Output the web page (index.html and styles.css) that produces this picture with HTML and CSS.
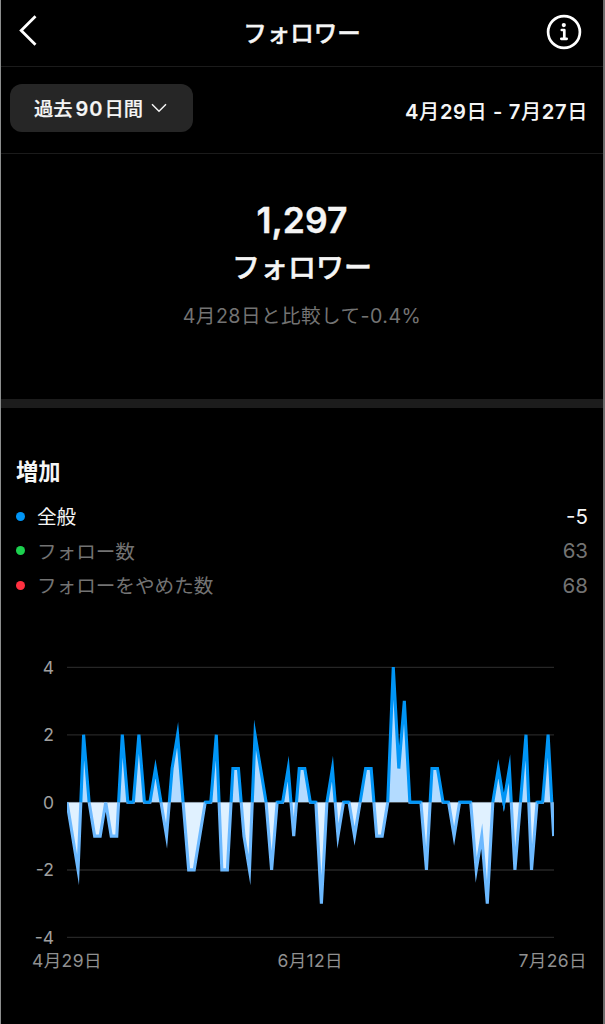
FILE: index.html
```html
<!DOCTYPE html>
<html lang="ja">
<head>
<meta charset="utf-8">
<title>フォロワー</title>
<link rel="stylesheet" href="styles.css">
</head>
<body>
<main class="screen">
  <header class="topbar">
    <svg class="back" width="36" height="34" viewBox="0 0 36 34"><path d="M17.5 2.3 3.2 16.6 17.5 30.7" fill="none" stroke="#fff" stroke-width="2.8"/></svg>
    <h1 class="title">フォロワー</h1>
    <svg class="info" width="36" height="36" viewBox="0 0 36 36"><circle cx="18" cy="18" r="15.9" fill="none" stroke="#fff" stroke-width="2.7"/><circle cx="17.8" cy="11.1" r="2.1" fill="#fff"/><path d="M15.8 16h2.5v8.6M15.3 24.8h5.4" fill="none" stroke="#fff" stroke-width="2.7" stroke-linecap="round" stroke-linejoin="round"/></svg>
  </header>
  <section class="filters">
    <button class="range"><span class="range-text">過去<span class="num">90</span>日間</span><svg width="16" height="10" viewBox="0 0 16 10"><path d="M1 1.2 8 8.2 15 1.2" fill="none" stroke="#f5f5f5" stroke-width="1.5"/></svg></button>
    <span class="dates"><b>4</b>月<b>29</b>日<b> - 7</b>月<b>27</b>日</span>
  </section>
  <section class="summary">
    <div class="count">1,297</div>
    <div class="count-label">フォロワー</div>
    <div class="compare">4月28日と比較して-0.4%</div>
  </section>
  <section class="growth">
    <h2 class="heading">増加</h2>
    <ul class="legend">
      <li class="row active"><i class="dot blue"></i><span class="name">全般</span><span class="value">-5</span></li>
      <li class="row"><i class="dot green"></i><span class="name">フォロー数</span><span class="value">63</span></li>
      <li class="row"><i class="dot red"></i><span class="name">フォローをやめた数</span><span class="value">68</span></li>
    </ul>
    <div class="chart">
      <div class="yaxis"><span>4</span><span>2</span><span>0</span><span>-2</span><span>-4</span></div>
      <svg class="plot" width="487" height="272" viewBox="0 0 487 272">
        <defs>
          <clipPath id="above"><path d="M0-2H487V136.3H442V145H432V136.3H42V120H35.5V136.3H0Z"/></clipPath>
          <clipPath id="below"><rect y="136.3" width="487" height="136"/></clipPath>
          <polyline id="series" vector-effect="non-scaling-stroke" points="0,0 1,-1 2,-2 3,2 4,0 5,-1 6,-1 7,0 8,-1 9,-1 10,2 11,0 12,0 13,2 14,0 15,0 16,1 17,0 18,-1 19,1 20,2 21,0 22,-2 23,-2 24,-1 25,0 26,0 27,2 28,-2 29,-2 30,1 31,1 32,-1 33,-2 34,2 35,1 36,0 37,-2 38,0 39,0 40,1 41,-1 42,1 43,1 44,0 45,0 46,-3 47,0 48,1 49,-1 50,0 51,0 52,-1 53,0 54,1 55,1 56,-1 57,-1 58,0 59,4 60,1 61,3 62,0 63,0 64,0 65,-2 66,1 67,1 68,0 69,0 70,-1 71,0 72,0 73,0 74,-2 75,-1 76,-3 77,0 78,1 79,0 80,1 81,-2 82,0 83,2 84,-2 85,0 86,0 87,2 88,-1 88,0"/>
          <polyline id="line" vector-effect="non-scaling-stroke" points="0,0 1,-1 2,-2 3,2 4,0 5,-1 6,-1 7,0 8,-1 9,-1 10,2 11,0 12,0 13,2 14,0 15,0 16,1 17,0 18,-1 19,1 20,2 21,0 22,-2 23,-2 24,-1 25,0 26,0 27,2 28,-2 29,-2 30,1 31,1 32,-1 33,-2 34,2 35,1 36,0 37,-2 38,0 39,0 40,1 41,-1 42,1 43,1 44,0 45,0 46,-3 47,0 48,1 49,-1 50,0 51,0 52,-1 53,0 54,1 55,1 56,-1 57,-1 58,0 59,4 60,1 61,3 62,0 63,0 64,0 65,-2 66,1 67,1 68,0 69,0 70,-1 71,0 72,0 73,0 74,-2 75,-1 76,-3 77,0 78,1 79,0 80,1 81,-2 82,0 83,2 84,-2 85,0 86,0 87,2 88,-1"/>
        </defs>
        <path class="grid" d="M0 1.3H487M0 68.8H487M0 136.3H487M0 204H487M0 271.3H487"/>
        <g clip-path="url(#below)"><g transform="translate(0 136.3) scale(5.53 -33.8)"><use href="#series" class="fill-low"/><use href="#line" class="line-low"/></g></g>
        <g clip-path="url(#above)"><g transform="translate(0 136.3) scale(5.53 -33.8)"><use href="#series" class="fill-high"/><use href="#line" class="line-high"/></g></g>
        <path class="flat" transform="translate(0 136.3) scale(5.53 1)" d="M11 0H12M14 0H15M25 0H26M38 0H39M44 0H45M50 0H51M62 0H64M68 0H69M71 0H73M85 0H86"/>
      </svg>
    </div>
    <div class="xaxis"><span>4月29日</span><span>6月12日</span><span>7月26日</span></div>
  </section>
</main>
</body>
</html>
```
FILE: styles.css
```css
* { box-sizing: border-box; margin: 0; padding: 0; }
body { background: #000; color: #f5f5f5; font-family: Inter, "Noto Sans CJK JP", sans-serif; }
.screen { width: 605px; height: 1024px; background: #000; border-left: 1px solid #8c8e8e; border-right: 2px solid #6c6c6c; overflow: hidden; }
.topbar { height: 67px; display: flex; justify-content: space-between; align-items: flex-start; padding: 14px 21px 0 17px; border-bottom: 1px solid #1b1b1b; }
.title { font-size: 23.5px; line-height: 39px; font-weight: 500; padding-left: 4px; -webkit-text-stroke: .4px; }
.filters { height: 87px; display: flex; justify-content: space-between; padding: 17px 16px 0 9px; border-bottom: 1px solid #1b1b1b; }
.range { width: 183px; height: 48px; border: 0; border-radius: 12px; background: #262626; color: #f5f5f5; display: flex; align-items: center; gap: 8px; padding-left: 24px; font: 500 19.3px/48px Inter, "Noto Sans CJK JP", sans-serif; -webkit-text-stroke: .2px; }
.range-text { white-space: nowrap; padding-top: 1px; }
.num { margin: 0 1px 0 3px; letter-spacing: 1px; font-weight: 600; font-size: 20px; }
.dates { font-size: 20.2px; font-weight: 500; line-height: 56px; letter-spacing: .6px; white-space: pre; margin-right: -1px; }
.dates b { font-weight: 600; }
.summary { height: 254px; display: flex; flex-direction: column; align-items: center; padding-top: 43px; border-bottom: 9px solid #1c1c1c; }
.count { font-size: 35.5px; line-height: 48px; font-weight: 600; -webkit-text-stroke: .4px; }
.count-label { font-size: 28px; line-height: 46px; font-weight: 500; -webkit-text-stroke: .5px; }
.compare { font-size: 19.6px; line-height: 30px; margin-top: 10px; color: #737373; letter-spacing: .45px; }
.growth { padding: 47px 16px 0 15px; }
.heading { font-size: 22.3px; line-height: 33px; font-weight: 600; }
.legend { list-style: none; margin-top: 11px; }
.row { height: 34.5px; display: flex; align-items: center; color: #737373; font-size: 19.6px; }
.active { color: #f5f5f5; }
.dot { width: 9px; height: 9px; border-radius: 50%; margin-right: 12px; }
.blue { background: #0095f6; }
.green { background: #1cd14f; }
.red { background: #ff3040; }
.name { flex: 1; margin-top: -1px; }
.value { font-size: 20.5px; margin-right: -1px; }
.chart { display: flex; margin-top: 63px; height: 272px; }
.yaxis { width: 38px; margin: -10px 13px 0 0; display: flex; flex-direction: column; align-items: flex-end; color: #a0a0a0; font-size: 17.5px; height: 293px; justify-content: space-between; }
.yaxis span { line-height: 23px; }
.plot { flex: none; }
.grid { stroke: #262626; stroke-width: 1.3; fill: none; }
.fill-low { fill: #e0f1ff; }
.fill-high { fill: #b3dbff; }
.line-low, .line-high { fill: none; stroke-width: 3.1px; stroke-miterlimit: 10; }
.line-low { stroke: #6cb9ff; }
.line-high { stroke: #0095f6; }
.flat { fill: none; stroke: #0095f6; stroke-width: 3; }
.xaxis { display: flex; justify-content: space-between; padding-left: 16px; color: #909090; font-size: 17.5px; line-height: 24px; margin-top: 11px; letter-spacing: .4px; }
```
